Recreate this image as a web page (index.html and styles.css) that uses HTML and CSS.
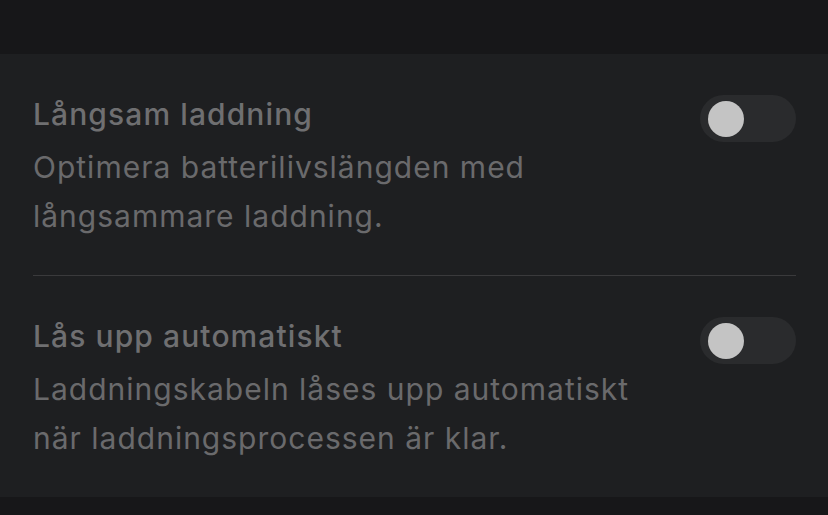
FILE: index.html
```html
<!DOCTYPE html>
<html>

<head>
	<meta charset="utf-8">
	<title>Laddningsinställningar</title>
	<meta name="viewport" content="width=device-width, initial-scale=1">
	<link rel="stylesheet" href="styles.css">
</head>

<body>
	<div class='top'></div>
	<section class='card'>
		<div class='setting'>
			<div class='setting__head'>
				<h2 class='setting__title'>Långsam laddning</h2>
				<span class='toggle'><span class='toggle__knob'></span></span>
			</div>
			<p class='setting__desc'>Optimera batterilivslängden med<br>långsammare laddning.</p>
		</div>
		<div class='setting'>
			<div class='setting__head'>
				<h2 class='setting__title'>Lås upp automatiskt</h2>
				<span class='toggle'><span class='toggle__knob'></span></span>
			</div>
			<p class='setting__desc'>Laddningskabeln låses upp automatiskt<br>när laddningsprocessen är klar.</p>
		</div>
	</section>
</body>

</html>
```

FILE: styles.css
```css
* {
	box-sizing: border-box;
}

html,
body {
	margin: 0;
	padding: 0;
	font-family: Inter, 'Noto Sans', sans-serif;
	background: #171719;
}

body {
	height: 515px;
	overflow: hidden;
}

p,
h2 {
	margin: 0;
}

.top {
	height: 54px;
}

/* card */

.card {
	background: #1e1f21;
	padding: 0 32px 0 33px;
	height: 443px;
}

.setting {
	padding: 41px 0 34px 0;
}

.setting + .setting {
	border-top: 1px solid #3a3a3c;
}

.setting__head {
	display: flex;
	align-items: center;
	justify-content: space-between;
	height: 47px;
}

.setting__title {
	font-size: 30px;
	font-weight: 500;
	letter-spacing: 1.1px;
	color: #6f6f71;
	line-height: 36px;
	margin-top: -9px;
}

.setting__desc {
	font-size: 30px;
	font-weight: 400;
	letter-spacing: 1px;
	color: #6a6a6c;
	line-height: 49px;
	margin-top: 1px;
}

/* toggle */

.toggle {
	width: 96px;
	height: 47px;
	border-radius: 24px;
	background: #2a2b2d;
	display: flex;
	align-items: center;
	padding-left: 8px;
}

.toggle__knob {
	width: 36px;
	height: 36px;
	border-radius: 50%;
	background: #c4c4c4;
}
```
